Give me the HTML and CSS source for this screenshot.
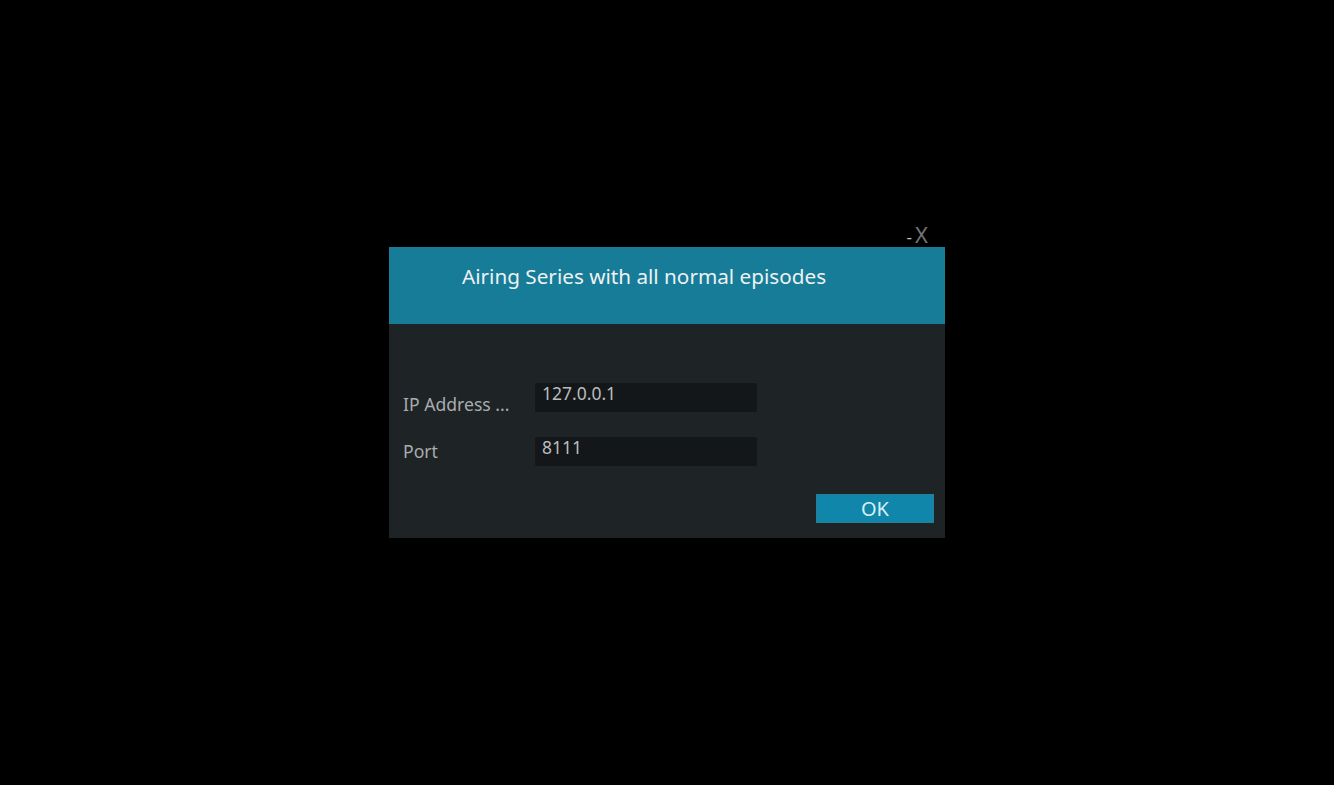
FILE: index.html
```html
<!DOCTYPE html>
<html>
<head>
<meta charset="utf-8">
<link rel="stylesheet" href="styles.css">
</head>
<body>
<div class="stage">
  <div class="dialog-wrap">
    <div class="close-row"><span class="close"><span class="dash">-</span><span class="x">X</span></span></div>
    <div class="dialog">
      <div class="header">Airing Series with all normal episodes</div>
      <div class="content">
        <div class="row row-ip">
          <div class="label">IP Address ...</div>
          <div class="input">127.0.0.1</div>
        </div>
        <div class="row row-port">
          <div class="label">Port</div>
          <div class="input">8111</div>
        </div>
        <div class="actions">
          <div class="ok">OK</div>
        </div>
      </div>
    </div>
  </div>
</div>
</body>
</html>
```
FILE: styles.css
```css
html, body {
  margin: 0;
  padding: 0;
  background: #000;
  width: 1334px;
  height: 785px;
  overflow: hidden;
  font-family: "Noto Sans", "Open Sans", sans-serif;
}
.stage {
  padding-top: 222px;
  padding-left: 389px;
}
.dialog-wrap {
  width: 556px;
}
.close-row {
  display: flex;
  justify-content: flex-end;
  height: 25px;
  padding-right: 17px;
}
.close {
  line-height: 25px;
  display: flex;
  align-items: baseline;
}
.close .dash {
  color: #c4c4c4;
  font-size: 17px;
  margin-right: 3px;
}
.close .x {
  color: #737373;
  font-size: 22px;
}
.dialog {
  background: #1e2326;
  height: 291px;
  display: flex;
  flex-direction: column;
}
.header {
  background: #167c98;
  height: 77px;
  box-sizing: border-box;
  padding-left: 73px;
  padding-top: 14px;
  color: #eef2f3;
  font-size: 20.7px;
  line-height: 30px;
}
.content {
  padding: 59px 11px 0 14px;
  display: flex;
  flex-direction: column;
}
.row {
  display: flex;
  align-items: flex-start;
}
.row-port {
  margin-top: 21px;
}
.label {
  width: 132px;
  color: #a9acae;
  font-size: 17.6px;
  line-height: 24px;
}
.row-ip .label {
  padding-top: 9px;
}
.row-port .label {
  padding-top: 2px;
}
.input {
  width: 222px;
  height: 29px;
  box-sizing: border-box;
  background: #141719;
  border-radius: 2px;
  color: #b9bcbe;
  font-size: 17.5px;
  line-height: 20px;
  padding: 0 7px;
}
.actions {
  display: flex;
  justify-content: flex-end;
  margin-top: 28px;
}
.ok {
  width: 118px;
  height: 29px;
  box-sizing: border-box;
  background: #0f86aa;
  border: 1px solid #2a7d96;
  color: #d9eef5;
  font-size: 20px;
  line-height: 27px;
  text-align: center;
}
```
